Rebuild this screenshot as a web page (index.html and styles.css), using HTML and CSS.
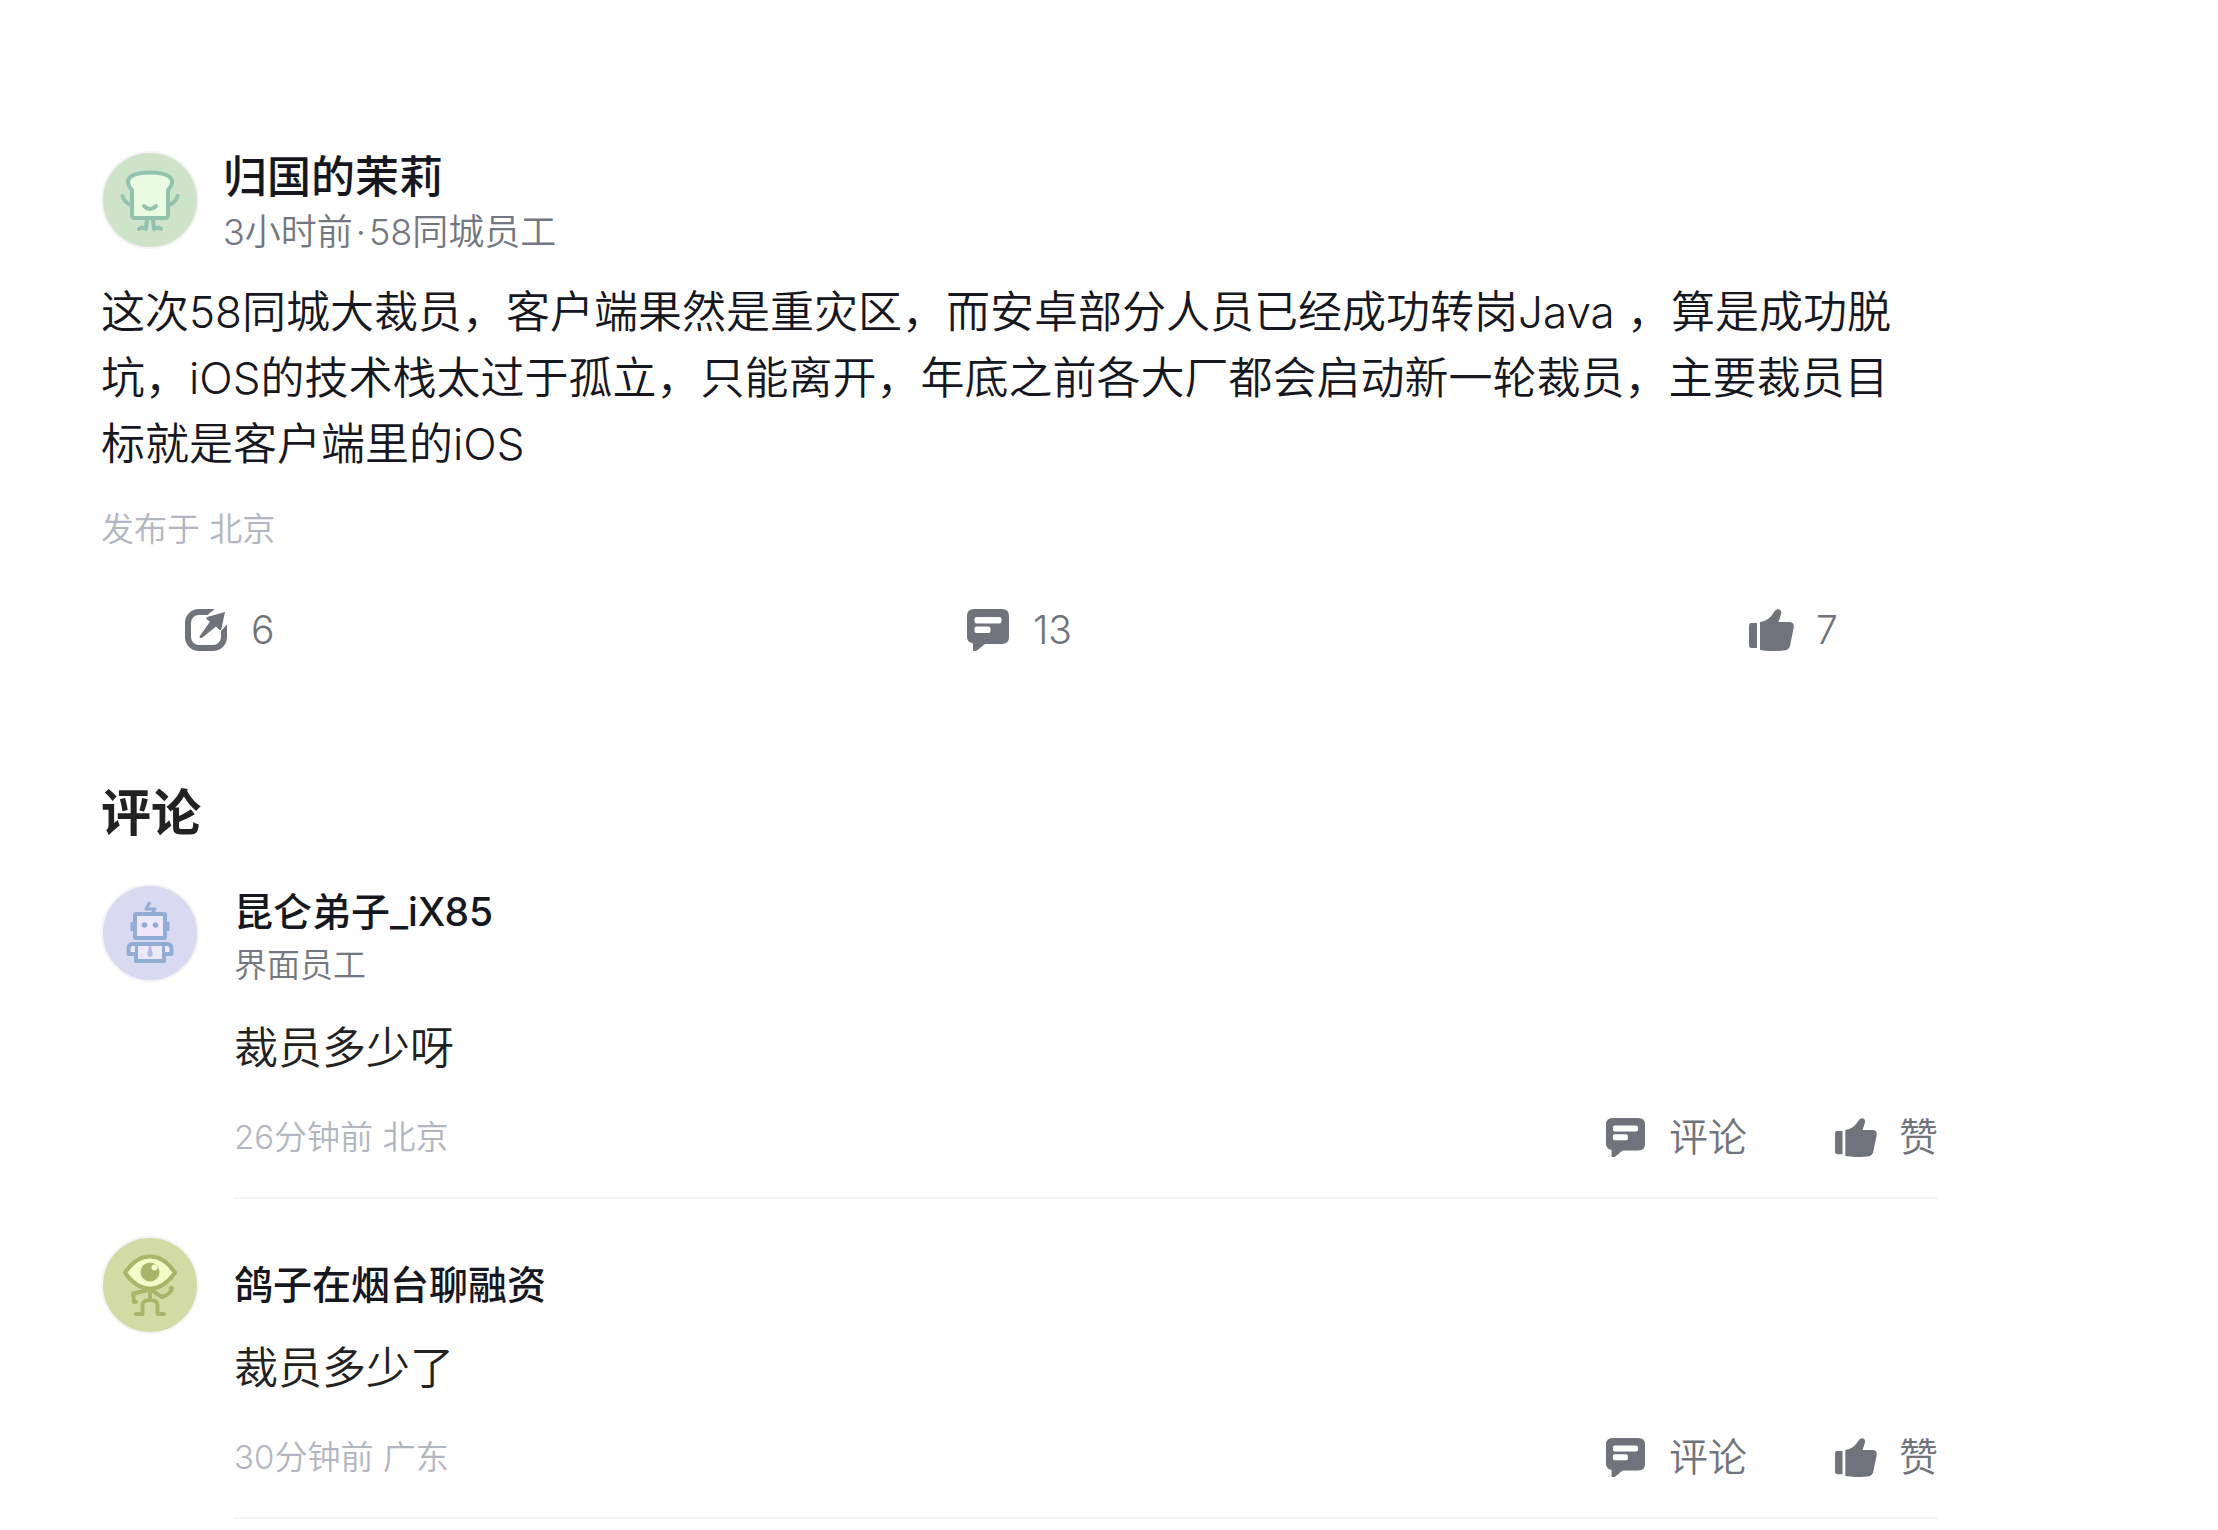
FILE: index.html
```html
<!DOCTYPE html>
<html lang="zh-CN">
<head>
<meta charset="utf-8">
<meta name="viewport" content="width=device-width, initial-scale=1">
<title>归国的茉莉的动态</title>
<link rel="stylesheet" href="styles.css">
</head>
<body>
<svg class="sprite" aria-hidden="true">
  <symbol id="icon-share" viewBox="0 0 42 42">
    <rect x="3" y="3" width="36" height="36" rx="11" fill="none" stroke="currentColor" stroke-width="6"/>
    <path d="M31 -1 H43 V14 L36 22 L20 8 Z" fill="#fff"/>
    <path d="M40 3 L36.500 19.500 Q36 22 34 20.500 L31 17.500 L17.500 28.500 Q15 30 14.500 27.500 L25 12.500 L22 10.500 Q20 8.500 23 7.800 Z" fill="currentColor"/>
  </symbol>
  <symbol id="icon-comment" viewBox="0 0 42 42">
    <path d="M7 0 H35 Q42 0 42 7 V28 Q42 35 35 35 H18 L10 41.500 Q6 43.500 6 40 V34.500 Q0 33 0 28 V7 Q0 0 7 0 Z" fill="currentColor"/>
    <rect x="7.500" y="8" width="27" height="6.500" rx="2" fill="#fff"/>
    <rect x="7.500" y="17.500" width="16" height="6.500" rx="2" fill="#fff"/>
  </symbol>
  <symbol id="icon-like" viewBox="0 0 45 42">
    <path d="M2 14 H8 V39 H2.500 Q0 39 0 36.500 V16.500 Q0 14 2 14 Z" fill="currentColor"/>
    <path d="M11 13 Q20 12 25 3 Q27 -0.500 30 0.300 Q33 1.500 32 5 Q31 9 29.500 13 H40 Q45.500 13 44.800 18 L41 37 Q40 40.500 36.500 41.200 Q24 43 11 41 Z" fill="currentColor"/>
  </symbol>
</svg>

<main class="page">
  <article class="post">
    <header class="post-head">
      <svg class="avatar avatar-toast" viewBox="0 0 94 94" role="img" aria-label="归国的茉莉">
        <g fill="none" stroke="#93c3ae" stroke-width="4" stroke-linecap="round" stroke-linejoin="round">
          <path d="M29 37 Q22 30 27 24 Q33 19.500 47 19.500 Q61 19.500 67 24 Q72 30 65 37 V62 Q65 65 62 65 H32 Q29 65 29 62 Z" fill="#e9fce2"/>
          <path d="M41 53 Q47 59 53 53"/>
          <path d="M19.500 43 Q21 49 27 51.500 M74.500 43 Q73 49 67 51.500"/>
          <path d="M44 66 L43 76 L39 74.500 L36 76 M50 66 L51 76 L55 74.500 L58 76"/>
        </g>
      </svg>
      <div class="post-author">
        <h1 class="post-name">归国的茉莉</h1>
        <p class="post-meta">3小时前<span class="dot">·</span>58同城员工</p>
      </div>
    </header>
    <p class="post-text">这次58同城大裁员，客户端果然是重灾区，而安卓部分人员已经成功转岗Java ，算是成功脱坑，iOS的技术栈太过于孤立，只能离开，年底之前各大厂都会启动新一轮裁员，主要裁员目标就是客户端里的iOS</p>
    <p class="post-place">发布于 北京</p>
    <div class="post-actions">
      <button class="action" type="button" aria-label="分享 6"><svg class="icon" viewBox="0 0 42 42"><use href="#icon-share"/></svg>6</button>
      <button class="action" type="button" aria-label="评论 13"><svg class="icon" viewBox="0 0 42 42"><use href="#icon-comment"/></svg>13</button>
      <button class="action action-like" type="button" aria-label="赞 7"><svg class="icon icon-wide" viewBox="0 0 45 42"><use href="#icon-like"/></svg>7</button>
    </div>
  </article>

  <section class="comments">
    <h2 class="comments-title">评论</h2>

    <article class="comment">
      <svg class="avatar avatar-robot" viewBox="0 0 94 94" role="img" aria-label="昆仑弟子_iX85">
        <g fill="none" stroke="#91add4" stroke-width="4" stroke-linejoin="round">
          <path d="M47 16 L43 23 H52 L49 28" stroke-width="3"/>
          <rect x="32" y="28" width="30" height="24" rx="1" fill="#ece8fa"/>
          <path d="M30 36 V45 M64 36 V45" stroke-width="5"/>
          <path d="M33 58 H61 V75 H33 Z" fill="#ece8fa"/>
          <path d="M32 58 H30 Q25.500 58 25.500 63 V68 H32 M62 58 H64 Q68.500 58 68.500 63 V68 H62" fill="#ece8fa"/>
          <path d="M32 58 H62"/>
        </g>
        <g fill="#91add4"><circle cx="41.500" cy="39" r="2.800"/><circle cx="52.500" cy="39" r="2.800"/></g>
        <path d="M46 60 H48 L49.500 67 Q50 71 47 71 Q44 71 44.500 67 Z" fill="#b5b9e3"/>
      </svg>
      <div class="comment-main">
        <div class="comment-head">
          <h3 class="comment-name">昆仑弟子_iX85</h3>
          <p class="comment-job">界面员工</p>
        </div>
        <p class="comment-text">裁员多少呀</p>
        <footer class="comment-foot">
          <span class="comment-time">26分钟前 北京</span>
          <button class="action" type="button"><svg class="icon icon-small" viewBox="0 0 42 42"><use href="#icon-comment"/></svg>评论</button>
          <button class="action action-like" type="button"><svg class="icon icon-small-wide" viewBox="0 0 45 42"><use href="#icon-like"/></svg>赞</button>
        </footer>
      </div>
    </article>

    <article class="comment">
      <svg class="avatar avatar-eye" viewBox="0 0 94 94" role="img" aria-label="鸽子在烟台聊融资">
        <g fill="none" stroke="#a9b669" stroke-width="4" stroke-linecap="round" stroke-linejoin="round">
          <path d="M22 34.500 Q33 18.500 47 18.500 Q61 18.500 72 34.500 Q61 50.500 47 50.500 Q33 50.500 22 34.500 Z" fill="#f3fcc8"/>
          <path d="M46 52 L30 55.500 L31 64 H33 M48 52 L59 59 Q68 56 69 50 L67.500 50"/>
          <path d="M47 52 V62 M33 76 H39.500 V67 Q40 62 47 62 Q54 62 54.500 67 V76 H61"/>
        </g>
        <circle cx="47" cy="34" r="9.500" fill="#a9b669"/>
        <circle cx="51.500" cy="29.500" r="3" fill="#f3fcc8"/>
      </svg>
      <div class="comment-main">
        <div class="comment-head">
          <h3 class="comment-name">鸽子在烟台聊融资</h3>
        </div>
        <p class="comment-text">裁员多少了</p>
        <footer class="comment-foot">
          <span class="comment-time">30分钟前 广东</span>
          <button class="action" type="button"><svg class="icon icon-small" viewBox="0 0 42 42"><use href="#icon-comment"/></svg>评论</button>
          <button class="action action-like" type="button"><svg class="icon icon-small-wide" viewBox="0 0 45 42"><use href="#icon-like"/></svg>赞</button>
        </footer>
      </div>
    </article>
  </section>
</main>
</body>
</html>
```
FILE: styles.css
```css
* {
  box-sizing: border-box;
}

body,
h1,
h2,
h3,
p {
  margin: 0;
}

body {
  background: #fff;
  color: #17171f;
  font-family: Inter, "Noto Sans CJK SC", sans-serif;
  font-weight: 350;
}

.sprite {
  display: none;
}

.page {
  padding: 151px 280px 0 101px;
}

/* Avatars */
.avatar {
  flex: none;
  width: 98px;
  height: 98px;
  border: 2px solid #f4f4f5;
  border-radius: 50%;
}

.avatar-toast {
  background: #cfe3ca;
}

.avatar-robot {
  background: #d9d9f1;
}

.avatar-eye {
  background: #d3dba5;
}

/* Post */
.post-head {
  display: flex;
  gap: 24px;
}

.post-name {
  font-size: 44px;
  font-weight: 500;
  line-height: 52px;
}

.post-meta {
  color: #74777f;
  font-size: 36px;
  line-height: 58px;
}

.dot {
  margin: 0 3px;
}

.post-text {
  margin-top: 18px;
  padding-right: 28px;
  font-size: 44px;
  line-height: 66px;
}

.post-place {
  margin-top: 30px;
  color: #b3b5c0;
  font-size: 33px;
  line-height: 44px;
}

.post-actions {
  display: flex;
  justify-content: space-between;
  margin-top: 51px;
  padding: 0 84px;
}

.post-actions .action {
  flex: 0 0 105px;
}

.action {
  display: flex;
  align-items: center;
  gap: 24px;
  padding: 0;
  border: 0;
  background: none;
  color: #70737c;
  font-family: inherit;
  font-size: 39px;
  font-weight: inherit;
  line-height: 56px;
  cursor: pointer;
}

.action-like {
  gap: 22px;
}

.icon {
  flex: none;
  width: 42px;
  height: 42px;
}

.icon-wide {
  width: 45px;
}

.icon-small {
  width: 39px;
  height: 39px;
}

.icon-small-wide {
  width: 42px;
  height: 39px;
}

/* Comments */
.comments-title {
  margin-top: 125px;
  margin-bottom: 41px;
  color: #222;
  font-size: 50px;
  font-weight: 600;
  line-height: 60px;
}

.comment {
  display: flex;
  gap: 35px;
  margin-bottom: 37px;
}

.comment:last-child {
  margin-bottom: 0;
}

.comment-main {
  flex: 1;
  padding-bottom: 32px;
  border-bottom: 2px solid #f4f4f6;
}

.comment-head {
  display: flex;
  flex-direction: column;
  justify-content: center;
  min-height: 98px;
}

.comment-name {
  font-size: 39px;
  font-weight: 500;
  line-height: 56px;
}

.comment-job {
  margin-bottom: 24px;
  color: #74777f;
  font-size: 33px;
  line-height: 50px;
}

.comment-text {
  margin-top: 1px;
  color: #222;
  font-size: 44px;
  line-height: 66px;
}

.comment-foot {
  display: flex;
  align-items: center;
  gap: 88px;
  margin-top: 28px;
}

.comment-time {
  margin-right: auto;
  color: #b3b5c0;
  font-size: 33px;
  line-height: 56px;
}
```
